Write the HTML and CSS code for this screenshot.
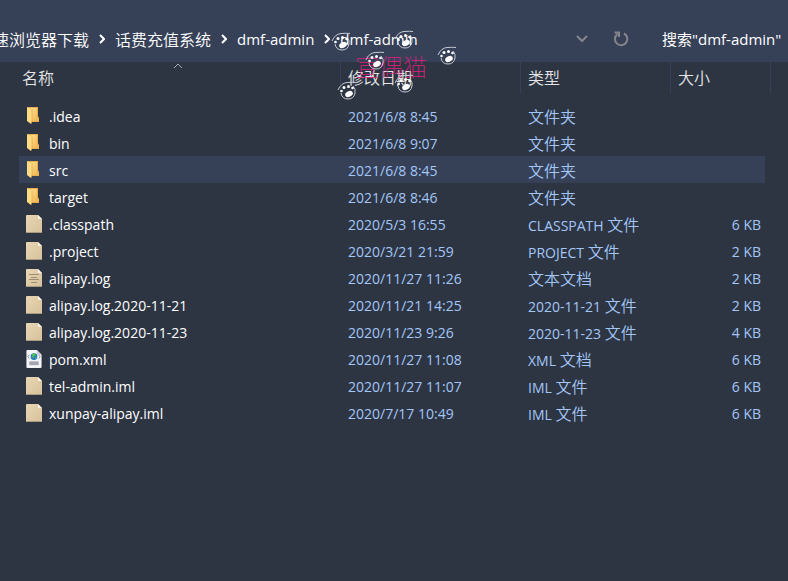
FILE: index.html
```html
<!DOCTYPE html>
<html lang="zh-CN">
<head>
  <meta charset="UTF-8">
  <meta name="viewport" content="width=device-width, initial-scale=1.0">
  <title>dmf-admin</title>
  <link rel="stylesheet" href="styles.css">
</head>
<body>

  <!-- 图标 -->
  <svg class="sprite" aria-hidden="true">
    <linearGradient id="gold" x1="0" y1="0" x2="1" y2="1">
      <stop offset="0" stop-color="#ffe08a"/>
      <stop offset="1" stop-color="#eeb04e"/>
    </linearGradient>
    <linearGradient id="paper" x1="0" y1="0" x2="1" y2="1">
      <stop offset="0" stop-color="#e9d6b2"/>
      <stop offset="1" stop-color="#d6c19c"/>
    </linearGradient>
    <symbol id="folder" viewBox="0 0 16 18">
      <path d="M2 0h10v9l1 2v4H5z" fill="#e9ab4c"/>
      <path d="M5 1h6v10h2v3H5z" fill="url(#gold)"/>
      <path d="M1 0l5 2v12l-1 3-4-3z" fill="#ffdc82"/>
      <path d="M6 2v12l-1 3" fill="none" stroke="#d99a43" stroke-width=".6"/>
    </symbol>
    <symbol id="file" viewBox="0 0 16 18">
      <path d="M1 0h11l4 4v13q0 1-1 1H1q-1 0-1-1V1q0-1 1-1z" fill="url(#paper)"/>
      <path d="M12 0l4 4h-3q-1 0-1-1z" fill="#fbf5e8"/>
      <path d="M.5 17.5h15" stroke="#a99b80"/>
    </symbol>
    <symbol id="log" viewBox="0 0 16 18">
      <use href="#file"/>
      <path d="M3 5.500h10M5 8.500h6M3 10.500h10M5 13.500h6" stroke="#9d8d74"/>
    </symbol>
    <symbol id="xml" viewBox="0 0 16 19">
      <path d="M1 0h10l5 5v13q0 1-1 1H1q-1 0-1-1V1q0-1 1-1z" fill="#f4f4f6"/>
      <path d="M11 0l5 5h-4q-1 0-1-1z" fill="#c9ccd2"/>
      <path d="M3 5L1.500 7 3 9M13 5l1.500 2L13 9" fill="none" stroke="#8d95a5"/>
      <circle cx="8" cy="7" r="3.500" fill="#2478c4"/>
      <path d="M6 4.500l3-1 1 2-2 1v2l-2-1zM9 8l2-1-1 3z" fill="#4fc24a"/>
      <path d="M3 12h10v4H3z" fill="#a3a6b0"/>
    </symbol>
    <symbol id="paw" viewBox="0 0 20 20">
      <path d="M1 10Q4 3 10 2.500T19 2.500M4 13q1 6 7 6t7-6q1-4-2-7" fill="none" stroke="#c5cad3"/>
      <ellipse cx="12" cy="14" rx="4" ry="2.800" transform="rotate(-25 12 14)" fill="#fff"/>
      <circle cx="4.500" cy="11" r="1.300" fill="#fff"/>
      <circle cx="7" cy="7.500" r="1.500" fill="#fff"/>
      <circle cx="11.500" cy="6.500" r="1.500" fill="#fff"/>
      <circle cx="15.500" cy="8" r="1.300" fill="#fff"/>
    </symbol>
  </svg>

  <header class="address-bar">
    <nav class="breadcrumb" aria-label="路径">
      <a class="zh" href="#">速浏览器下载</a>
      <svg class="sep" viewBox="0 0 6 10"><path d="M1 1l4 4-4 4"/></svg>
      <a class="zh" href="#">话费充值系统</a>
      <svg class="sep" viewBox="0 0 6 10"><path d="M1 1l4 4-4 4"/></svg>
      <a href="#">dmf-admin</a>
      <svg class="sep" viewBox="0 0 6 10"><path d="M1 1l4 4-4 4"/></svg>
      <a href="#">dmf-admin</a>
    </nav>
    <button class="tool" aria-label="历史记录">
      <svg width="12" height="8" viewBox="0 0 12 8"><path d="M1 1l5 5 5-5"/></svg>
    </button>
    <button class="tool" aria-label="刷新">
      <svg width="16" height="16" viewBox="0 0 16 16"><path d="M11 2.500A6.200 6.200 0 1 1 4.500 3M1.500 1.500h4.500v4.500"/></svg>
    </button>
    <input class="search" type="text" aria-label="搜索" placeholder='搜索"dmf-admin"'>
  </header>

  <main>
    <table class="files">
      <colgroup>
        <col>
        <col class="col-date">
        <col class="col-type">
        <col class="col-size">
      </colgroup>
      <thead>
        <tr>
          <th class="zh sorted">名称
            <svg class="sort" viewBox="0 0 10 6"><path d="M1 5l4-4 4 4"/></svg>
          </th>
          <th class="zh">修改日期</th>
          <th class="zh">类型</th>
          <th class="zh">大小</th>
        </tr>
      </thead>
      <tbody>
        <tr><td><svg class="icon"><use href="#folder"/></svg>.idea</td><td>2021/6/8 8:45</td><td><span class="zh">文件夹</span></td><td></td></tr>
        <tr><td><svg class="icon"><use href="#folder"/></svg>bin</td><td>2021/6/8 9:07</td><td><span class="zh">文件夹</span></td><td></td></tr>
        <tr class="selected"><td><svg class="icon"><use href="#folder"/></svg>src</td><td>2021/6/8 8:45</td><td><span class="zh">文件夹</span></td><td></td></tr>
        <tr><td><svg class="icon"><use href="#folder"/></svg>target</td><td>2021/6/8 8:46</td><td><span class="zh">文件夹</span></td><td></td></tr>
        <tr><td><svg class="icon"><use href="#file"/></svg>.classpath</td><td>2020/5/3 16:55</td><td>CLASSPATH <span class="zh">文件</span></td><td>6 KB</td></tr>
        <tr><td><svg class="icon"><use href="#file"/></svg>.project</td><td>2020/3/21 21:59</td><td>PROJECT <span class="zh">文件</span></td><td>2 KB</td></tr>
        <tr><td><svg class="icon"><use href="#log"/></svg>alipay.log</td><td>2020/11/27 11:26</td><td><span class="zh">文本文档</span></td><td>2 KB</td></tr>
        <tr><td><svg class="icon"><use href="#file"/></svg>alipay.log.2020-11-21</td><td>2020/11/21 14:25</td><td>2020-11-21 <span class="zh">文件</span></td><td>2 KB</td></tr>
        <tr><td><svg class="icon"><use href="#file"/></svg>alipay.log.2020-11-23</td><td>2020/11/23 9:26</td><td>2020-11-23 <span class="zh">文件</span></td><td>4 KB</td></tr>
        <tr><td><svg class="icon"><use href="#xml"/></svg>pom.xml</td><td>2020/11/27 11:08</td><td>XML <span class="zh">文档</span></td><td>6 KB</td></tr>
        <tr><td><svg class="icon"><use href="#file"/></svg>tel-admin.iml</td><td>2020/11/27 11:07</td><td>IML <span class="zh">文件</span></td><td>6 KB</td></tr>
        <tr><td><svg class="icon"><use href="#file"/></svg>xunpay-alipay.iml</td><td>2020/7/17 10:49</td><td>IML <span class="zh">文件</span></td><td>6 KB</td></tr>
      </tbody>
    </table>
  </main>

  <!-- 浮在窗口上的猫爪 -->
  <div class="charm">
    <span class="charm-name">宣偶猫</span>
    <svg class="paw paw-1"><use href="#paw"/></svg>
    <svg class="paw paw-2"><use href="#paw"/></svg>
    <svg class="paw paw-3"><use href="#paw"/></svg>
    <svg class="paw paw-4"><use href="#paw"/></svg>
    <svg class="paw paw-5"><use href="#paw"/></svg>
    <svg class="paw paw-6"><use href="#paw"/></svg>
  </div>

</body>
</html>
```
FILE: styles.css
```css
* {
  box-sizing: border-box;
}

body {
  margin: 0;
  min-height: 100vh;
  background-color: #2d3543;
  color: #fff;
  font-family: "Open Sans", "Noto Sans CJK SC", sans-serif;
  font-size: 14px;
  overflow-x: hidden;
}

.sprite {
  position: absolute;
  width: 0;
  height: 0;
}

.zh {
  font-family: "Noto Sans CJK SC", sans-serif;
  font-size: 16px;
  font-weight: 350;
  line-height: 20px;
}

/* 地址栏 */
.address-bar {
  display: flex;
  align-items: center;
  height: 62px;
  padding-top: 15px;
  background-color: #364158;
}

.breadcrumb {
  flex: 1;
  display: flex;
  align-items: center;
  gap: 10px;
  margin-left: -7px;
  font-size: 15px;
  line-height: 20px;
  white-space: nowrap;
}

.breadcrumb a {
  color: #fff;
  text-decoration: none;
}

.sep {
  width: 6px;
  height: 10px;
  fill: none;
  stroke: #fff;
  stroke-width: 2;
}

.tool {
  display: flex;
  align-items: center;
  justify-content: center;
  width: 39px;
  height: 30px;
  padding: 0;
  border: none;
  background: none;
}

.tool svg {
  fill: none;
  stroke: #85858a;
  stroke-width: 2;
}

.search {
  width: 126px;
  margin-left: 22px;
  padding: 0;
  border: none;
  outline: none;
  background: none;
  color: #fff;
  font-family: inherit;
  font-size: 15px;
}

.search::placeholder {
  color: #fff;
  opacity: 1;
}

/* 文件列表 */
.files {
  width: calc(100% - 36px);
  margin-left: 19px;
  table-layout: fixed;
  border-collapse: separate;
  border-spacing: 0;
}

.col-date {
  width: 180px;
}

.col-type {
  width: 150px;
}

.col-size {
  width: 100px;
}

.files th {
  height: 32px;
  padding: 0 0 2px 7px;
  border-right: 1px solid #364158;
  text-align: left;
  color: #e6e6e6;
}

.files th:first-child {
  padding-left: 3px;
}

.sorted {
  position: relative;
}

.sort {
  position: absolute;
  top: 1px;
  left: 50%;
  width: 10px;
  height: 6px;
  margin-left: -7px;
  fill: none;
  stroke: #a5a9b0;
}

/* 表头和第一行之间的空隙 */
.files tbody::before {
  content: "";
  display: block;
  height: 8px;
}

.files td {
  height: 27px;
  padding: 2px 0 0 7px;
  line-height: 20px;
  white-space: nowrap;
  color: #a3c6f7;
}

.files td:first-child {
  color: #fff;
}

.files td:last-child {
  padding-right: 4px;
  border-right: 6px solid transparent;
  background-clip: padding-box;
  text-align: right;
}

.files .selected td {
  background-color: #364158;
}

.icon {
  width: 16px;
  height: 18px;
  margin-right: 7px;
  vertical-align: -3px;
}

/* 猫爪 */
.charm {
  position: absolute;
  top: 28px;
  left: 336px;
  width: 122px;
  height: 74px;
  pointer-events: none;
}

.charm-name {
  position: absolute;
  top: 20px;
  left: 19px;
  font-family: "Noto Sans CJK SC", sans-serif;
  font-size: 24px;
  font-weight: 100;
  line-height: 36px;
  white-space: nowrap;
  color: #e01c80;
}

.paw {
  position: absolute;
  width: 20px;
  height: 20px;
}

.paw-1 { top: 3px; left: -5px; }
.paw-2 { top: 1px; left: 58px; }
.paw-3 { top: 17px; left: 101px; }
.paw-4 { top: 22px; left: 29px; }
.paw-5 { top: 45px; left: 58px; }
.paw-6 { top: 52px; left: 1px; }
```
